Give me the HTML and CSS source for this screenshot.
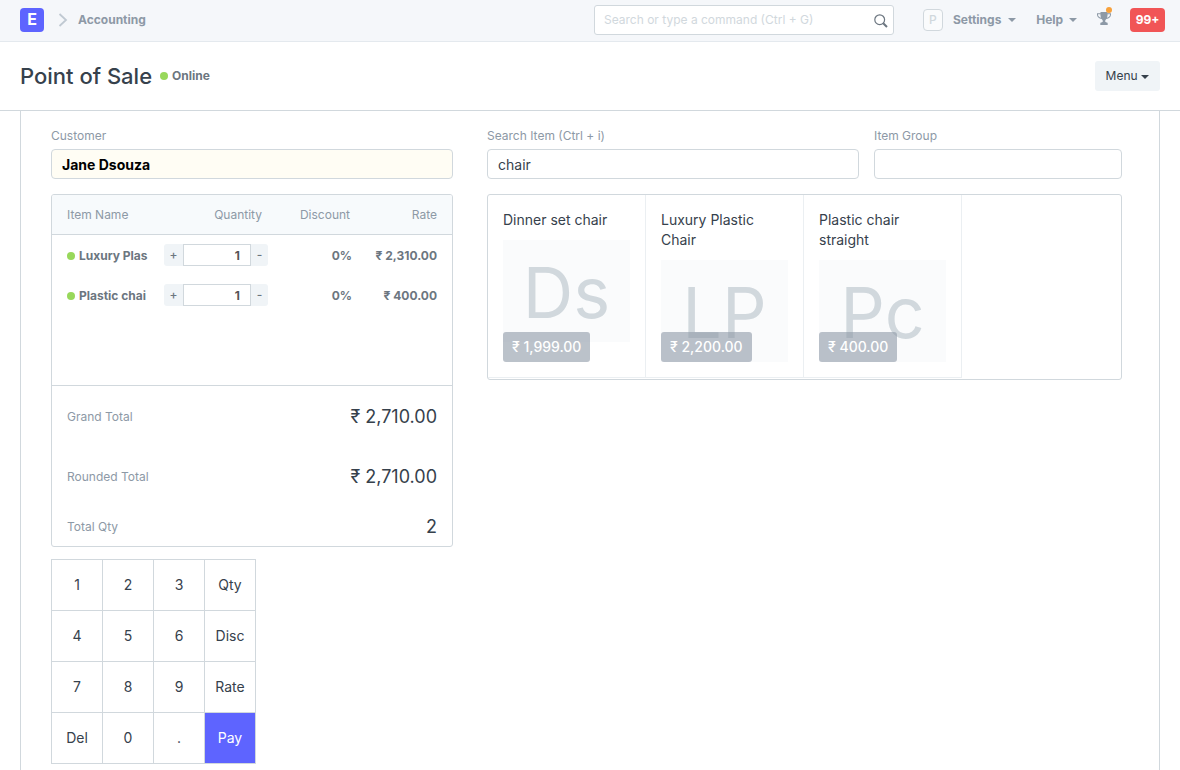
FILE: index.html
```
<!DOCTYPE html>
<html lang="en">
<head>
<meta charset="utf-8">
<meta name="viewport" content="width=device-width, initial-scale=1">
<title>Point of Sale</title>
<link rel="stylesheet" href="styles.css">
</head>
<body>
<header class="navbar">
  <a class="brand" href="#" aria-label="Home">E</a>
  <svg class="chevron" width="10" height="16" viewBox="0 0 10 16" aria-hidden="true"><path d="M1.500 2 8 8 1.500 14" fill="none" stroke="#c0c9d2" stroke-width="1.800"/></svg>
  <a class="crumb" href="#">Accounting</a>
  <div class="search">
    <input class="search-input" type="text" aria-label="Search" placeholder="Search or type a command (Ctrl + G)">
    <svg class="search-icon" width="14" height="14" viewBox="0 0 14 14" aria-hidden="true"><circle cx="5.700" cy="5.700" r="4.900" fill="none" stroke="#6c7680" stroke-width="1.200"/><path d="M9.200 9.200 13 13" stroke="#6c7680" stroke-width="2"/></svg>
  </div>
  <nav class="nav-links">
    <span class="avatar">P</span>
    <button class="nav-button settings" type="button">Settings <span class="caret"></span></button>
    <button class="nav-button help" type="button">Help <span class="caret"></span></button>
    <button class="trophy" type="button" aria-label="Achievements">
      <svg width="14" height="13" viewBox="0 0 14 13" aria-hidden="true"><path fill="#8d99a6" d="M3.500 0h7v1.300H14v1.500C14 5 12 6.600 9.400 6.900 8.700 7.700 8.200 8.200 8.200 9c0 1 .5 1.400 1.500 1.400.6 0 1 .5 1 1V13H3.300v-1.600c0-.5.400-1 1-1 1 0 1.500-.4 1.500-1.400 0-.8-.5-1.300-1.200-2.100C2 6.600 0 5 0 2.800V1.300h3.500zM1 2.300v.5c0 1.200 1.200 2.500 3 3-.4-1.100-.6-2.200-.6-3.500zm12 0h-2.400c0 1.300-.2 2.400-.6 3.500 1.800-.5 3-1.800 3-3z"/></svg>
      <span class="trophy-dot"></span>
    </button>
    <button class="count" type="button">99+</button>
  </nav>
</header>
<div class="page-head">
  <h1 class="title">Point of Sale</h1>
  <span class="status"><span class="dot"></span>Online</span>
  <button class="menu" type="button">Menu <span class="caret"></span></button>
</div>
<main class="page">
  <section class="cart-side">
    <div class="field">
      <label class="label" for="customer">Customer</label>
      <input class="control customer" id="customer" type="text" value="Jane Dsouza">
    </div>
    <div class="cart">
      <div class="cart-items">
        <table class="cart-table">
          <colgroup><col class="col-name"><col class="col-qty"><col class="col-disc"><col class="col-rate"></colgroup>
          <thead><tr><th class="name">Item Name</th><th class="qty">Quantity</th><th class="disc">Discount</th><th class="rate">Rate</th></tr></thead>
          <tbody>
            <tr>
              <td class="name"><span class="dot"></span>Luxury Plas</td>
              <td class="steps"><div class="stepper"><button class="step" type="button">+</button><input class="step-value" type="text" aria-label="Luxury Plastic Chair quantity" value="1"><button class="step" type="button">-</button></div></td>
              <td>0%</td><td class="rate">₹ 2,310.00</td>
            </tr>
            <tr>
              <td class="name"><span class="dot"></span>Plastic chai</td>
              <td class="steps"><div class="stepper"><button class="step" type="button">+</button><input class="step-value" type="text" aria-label="Plastic chair straight quantity" value="1"><button class="step" type="button">-</button></div></td>
              <td>0%</td><td class="rate">₹ 400.00</td>
            </tr>
          </tbody>
        </table>
      </div>
      <div class="totals">
        <div class="total"><span>Grand Total</span><span class="amount">₹ 2,710.00</span></div>
        <div class="total"><span>Rounded Total</span><span class="amount">₹ 2,710.00</span></div>
        <div class="total total-qty"><span>Total Qty</span><span class="amount">2</span></div>
      </div>
    </div>
    <div class="numpad">
      <button class="key" type="button">1</button><button class="key" type="button">2</button><button class="key" type="button">3</button><button class="key" type="button">Qty</button>
      <button class="key" type="button">4</button><button class="key" type="button">5</button><button class="key" type="button">6</button><button class="key" type="button">Disc</button>
      <button class="key" type="button">7</button><button class="key" type="button">8</button><button class="key" type="button">9</button><button class="key" type="button">Rate</button>
      <button class="key" type="button">Del</button><button class="key" type="button">0</button><button class="key" type="button">.</button><button class="key pay" type="button">Pay</button>
    </div>
  </section>
  <section class="item-side">
    <div class="filters">
      <div class="field">
        <label class="label" for="search-item">Search Item (Ctrl + i)</label>
        <input class="control" id="search-item" type="text" value="chair">
      </div>
      <div class="field">
        <label class="label" for="item-group">Item Group</label>
        <input class="control" id="item-group" type="text">
      </div>
    </div>
    <div class="items">
      <a class="item" href="#"><span class="item-name">Dinner set chair</span><span class="item-image">Ds</span><span class="price">₹ 1,999.00</span></a>
      <a class="item" href="#"><span class="item-name">Luxury Plastic Chair</span><span class="item-image">LP</span><span class="price">₹ 2,200.00</span></a>
      <a class="item" href="#"><span class="item-name">Plastic chair straight</span><span class="item-image">Pc</span><span class="price">₹ 400.00</span></a>
    </div>
  </section>
</main>
</body>
</html>
```
FILE: styles.css
```
*, *::before, *::after { box-sizing: border-box; }
html { overflow: hidden; }
body {
  margin: 0;
  min-height: 100vh;
  display: flex;
  flex-direction: column;
  font: 12px/18px Inter, "Noto Sans", sans-serif;
  color: #36414c;
  background: #fff;
}
button, input { font: inherit; color: inherit; margin: 0; }
button { padding: 0; border: 0; background: none; cursor: pointer; }
a { color: inherit; text-decoration: none; }

.navbar {
  display: flex;
  align-items: center;
  height: 42px;
  padding: 0 15px 2px 20px;
  background: #f5f7fa;
  border-bottom: 1px solid #e4e9ee;
  color: #8d99a6;
  font-weight: 700;
}
.brand {
  width: 24px;
  height: 24px;
  margin-right: 14px;
  border-radius: 4px;
  background: #5e64ff;
  color: #fff;
  font-size: 16px;
  line-height: 23px;
  text-align: center;
}
.crumb { margin-left: 10px; line-height: 20px; padding-top: 1px; }
.search { position: relative; width: 300px; margin-left: auto; }
.search-input {
  display: block;
  width: 100%;
  height: 30px;
  padding: 0 36px 0 9px;
  border: 1px solid #d1d8dd;
  border-radius: 3px;
  background: #fff;
  color: #36414c;
  font-weight: 400;
}
.search-input::placeholder { color: #d1d8dd; opacity: 1; }
.search-icon { position: absolute; right: 6px; top: 9px; }
.nav-links { display: flex; align-items: center; margin-left: 29px; }
.avatar {
  width: 20px;
  height: 22px;
  border: 1px solid #d1d8dd;
  border-radius: 4px;
  background: #fafbfc;
  color: #d1d8dd;
  font-weight: 500;
  line-height: 20px;
  text-align: center;
}
.caret {
  display: inline-block;
  margin-left: 2px;
  vertical-align: middle;
  border-top: 4px solid;
  border-left: 4px solid transparent;
  border-right: 4px solid transparent;
}
.nav-button { font-weight: 700; }
.settings { margin-left: 10px; }
.settings .caret { margin-left: 4px; }
.help { margin-left: 20px; }
.help .caret { margin-left: 3px; }
.trophy { position: relative; display: flex; height: 16px; margin-left: 20px; }
.trophy-dot {
  position: absolute;
  top: -5px;
  right: -1px;
  width: 6px;
  height: 6px;
  border-radius: 50%;
  background: #f7a13b;
}
.count {
  width: 35px;
  height: 24px;
  margin-left: 19px;
  border-radius: 4px;
  background: #f15556;
  color: #fff;
  font-weight: 700;
}

.page-head {
  display: flex;
  align-items: center;
  height: 69px;
  padding: 0 20px;
  border-bottom: 1px solid #d1d8dd;
}
.title { margin: 0; font-size: 22px; line-height: 30px; font-weight: 500; }
.dot {
  display: inline-block;
  width: 8px;
  height: 8px;
  margin-right: 4px;
  border-radius: 50%;
  background: #98d85b;
}
.status { margin-left: 8px; color: #6c7680; font-weight: 700; }
.menu {
  height: 30px;
  margin-left: auto;
  padding: 0 11px;
  border-radius: 3px;
  background: #f0f4f7;
}
.menu .caret { margin-left: 0; }

.page {
  flex: 1;
  display: grid;
  grid-template-columns: minmax(0, 402fr) minmax(0, 635fr);
  gap: 34px;
  align-items: start;
  margin: 0 20px;
  padding: 16px 37px 0 30px;
  border: 1px solid #d1d8dd;
  border-width: 0 1px;
}
.label { display: block; margin-bottom: 4px; color: #8d99a6; }
.control {
  display: block;
  width: 100%;
  height: 30px;
  padding: 0 10px;
  border: 1px solid #d1d8dd;
  border-radius: 4px;
  background: #fff;
  font-size: 14px;
}
.customer { background: #fffdf4; color: #000; font-weight: 700; }
.cart {
  margin-top: 15px;
  border: 1px solid #d1d8dd;
  border-radius: 3px;
  overflow: hidden;
}
.cart-items { min-height: 191px; border-bottom: 1px solid #d1d8dd; }
.cart-table {
  width: 100%;
  table-layout: fixed;
  border-collapse: separate;
  border-spacing: 0;
}
.col-name { width: 28%; }
.col-qty { width: 26%; }
.col-disc { width: 21%; }
.col-rate { width: 25%; }
.cart-table th, .cart-table td { height: 40px; padding: 0; text-align: right; }
.cart-table th {
  border-bottom: 1px solid #d1d8dd;
  background: #f7fafc;
  color: #8d99a6;
  font-weight: 400;
}
.cart-table td {
  padding-top: 2px;
  color: #6c7680;
  font-weight: 700;
  white-space: nowrap;
}
.cart-table .steps { padding-top: 0; }
.cart-table .name { padding-left: 15px; text-align: left; }
.cart-table .qty { padding-right: 6px; }
.cart-table .disc { padding-right: 2px; }
.cart-table .rate { padding-right: 15px; }
.stepper { display: flex; height: 22px; }
.step {
  flex: none;
  width: 19px;
  background: #f0f4f7;
  color: #6c7680;
  font-weight: 500;
  border-radius: 3px 0 0 3px;
}
.step:last-child { width: 17px; border-radius: 0 3px 3px 0; }
.step-value {
  flex: 1;
  min-width: 0;
  padding: 1px 10px 0;
  border: 1px solid #d1d8dd;
  background: #fff;
  color: #555;
  font-weight: 700;
  text-align: right;
}
.total {
  display: flex;
  align-items: center;
  justify-content: space-between;
  height: 60px;
  padding: 2px 15px 0;
  color: #8d99a6;
}
.total-qty { height: 40px; }
.amount { color: #36414c; font-size: 18px; }

.numpad {
  display: inline-grid;
  grid-template-columns: repeat(4, 51px);
  grid-auto-rows: 51px;
  margin-top: 12px;
  border: 1px solid #d1d8dd;
  border-width: 1px 0 0 1px;
}
.key {
  border: 1px solid #d1d8dd;
  border-width: 0 1px 1px 0;
  font-size: 14px;
}
.pay { background: #5e64ff; color: #fff; }

.filters { display: grid; grid-template-columns: 3fr 2fr; gap: 15px; }
.items {
  display: grid;
  grid-template-columns: repeat(auto-fill, 158px);
  margin-top: 15px;
  padding-bottom: 1px;
  border: 1px solid #d1d8dd;
  border-radius: 3px;
}
.item {
  position: relative;
  padding: 15px;
  border: 1px solid #ebeff2;
  border-width: 0 1px 1px 0;
  font-size: 14px;
  line-height: 20px;
}
.item-name { display: block; margin-bottom: 10px; }
.item-image {
  display: block;
  height: 102px;
  background: #fafbfc;
  color: #d1d8dd;
  font-size: 70px;
  line-height: 106px;
  text-align: center;
}
.price {
  position: absolute;
  left: 15px;
  bottom: 15px;
  padding: 5px 9px;
  border-radius: 3px;
  background: rgba(141, 153, 166, 0.6);
  color: #fff;
  font-weight: 500;
}
```
